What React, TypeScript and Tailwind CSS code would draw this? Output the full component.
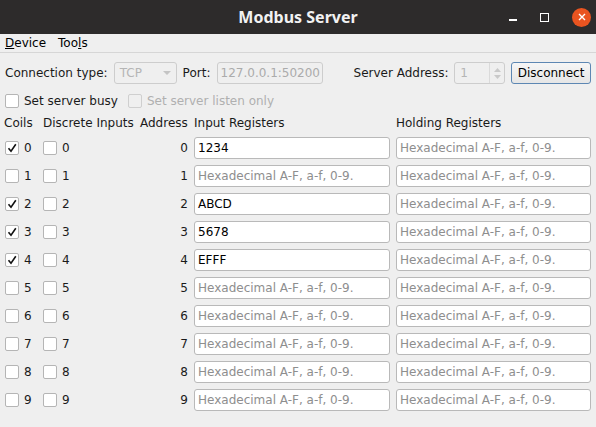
import React from 'react';

const font = { fontFamily: '"DejaVu Sans", sans-serif' };

const Check: React.FC<{ checked?: boolean; disabled?: boolean }> = ({ checked, disabled }) => (
  <span
    className={`flex h-[14px] w-[14px] shrink-0 items-center justify-center rounded-[2px] border ${
      disabled ? 'border-[#cfcfcf] bg-[#efefef]' : 'border-[#b5b5b5] bg-white'
    }`}
  >
    {checked && (
      <svg width="10" height="10" viewBox="0 0 10 10">
        <path d="M1.5 5.2 L4 8.2 L8.8 1.2" fill="none" stroke="#111" strokeWidth="1.6" />
      </svg>
    )}
  </span>
);

const HexInput: React.FC<{ value?: string; width: string }> = ({ value, width }) => (
  <div
    className={`flex h-[22px] ${width} items-center rounded-[3px] border border-[#b9b9b9] bg-white px-[3px] text-[12px] ${
      value ? 'text-black' : 'text-[#8e8e8e]'
    }`}
  >
    {value ?? 'Hexadecimal A-F, a-f, 0-9.'}
  </div>
);

const rows = [
  { coil: true, input: '1234' },
  { coil: false },
  { coil: true, input: 'ABCD' },
  { coil: true, input: '5678' },
  { coil: true, input: 'EFFF' },
  { coil: false },
  { coil: false },
  { coil: false },
  { coil: false },
  { coil: false },
];

export default function App() {
  return (
    <div className="flex h-[427px] w-[596px] flex-col overflow-hidden bg-[#efefef] text-[12px] text-[#1a1a1a]" style={font}>
      {/* title bar */}
      <div className="relative flex h-[34px] shrink-0 items-center justify-center bg-[#2d2b2b]">
        <span className="text-[16px] font-bold text-[#f2f2f2]" style={{ fontFamily: '"Noto Sans", sans-serif' }}>
          Modbus Server
        </span>
        <div className="absolute right-[5px] top-0 flex h-[34px] items-center gap-[23px]">
          <span className="mt-[6px] h-[1.5px] w-[8px] bg-white" />
          <span className="h-[9px] w-[9px] border border-white" />
          <span className="flex h-[19px] w-[19px] items-center justify-center rounded-full bg-[#e95420]">
            <svg width="8" height="8" viewBox="0 0 8 8">
              <path d="M1 1 L7 7 M7 1 L1 7" stroke="white" strokeWidth="1.4" />
            </svg>
          </span>
        </div>
      </div>

      {/* menu bar */}
      <div className="flex h-[19px] shrink-0 items-center gap-[12px] border-b border-[#d6d6d6] px-[5px] text-[12px] text-black">
        <span>
          <span className="underline">D</span>evice
        </span>
        <span>
          Too<span className="underline">l</span>s
        </span>
      </div>

      {/* connection row */}
      <div className="mt-[9px] flex h-[22px] items-center px-[5px]">
        <span className="w-[109px]">Connection type:</span>
        <div className="flex h-[22px] w-[63px] items-center justify-between rounded-[3px] border border-[#cdcdcd] px-[5px] text-[#b5b5b5]">
          <span>TCP</span>
          <svg width="8" height="5" viewBox="0 0 8 5">
            <path d="M0 0 L8 0 L4 4 Z" fill="#c4c4c4" />
          </svg>
        </div>
        <span className="ml-[6px] w-[34px]">Port:</span>
        <div className="flex h-[22px] w-[106px] items-center rounded-[3px] border border-[#cdcdcd] px-[3px] text-[#ababab]">
          127.0.0.1:50200
        </div>
        <span className="ml-[31px] w-[101px]">Server Address:</span>
        <div className="flex h-[22px] w-[51px] items-center justify-between rounded-[3px] border border-[#cdcdcd] pl-[5px] text-[#b5b5b5]">
          <span>1</span>
          <div className="flex h-full w-[15px] flex-col items-center justify-center gap-[3px] border-l border-[#dadada]">
            <svg width="7" height="4" viewBox="0 0 7 4">
              <path d="M0 4 L3.5 0 L7 4 Z" fill="#c9c9c9" />
            </svg>
            <svg width="7" height="4" viewBox="0 0 7 4">
              <path d="M0 0 L3.5 4 L7 0 Z" fill="#c9c9c9" />
            </svg>
          </div>
        </div>
        <button className="ml-[6px] flex h-[22px] w-[80px] items-center justify-center rounded-[3px] border border-[#5d87b3] bg-gradient-to-b from-[#f6f6f6] to-[#e6e6e6] text-[12px] text-black">
          Disconnect
        </button>
      </div>

      {/* options row */}
      <div className="mt-[9px] flex h-[15px] items-center px-[5px]">
        <Check />
        <span className="ml-[5px]">Set server busy</span>
        <span className="ml-[10px]">
          <Check disabled />
        </span>
        <span className="ml-[5px] text-[#b0b0b0]">Set server listen only</span>
      </div>

      {/* header row */}
      <div className="mt-[7px] flex h-[16px] items-center pl-[4px]">
        <span className="w-[39px]">Coils</span>
        <span className="w-[97px]">Discrete Inputs</span>
        <span className="w-[54px]">Address</span>
        <span className="w-[202px]">Input Registers</span>
        <span>Holding Registers</span>
      </div>

      {/* data rows */}
      <div className="mt-[6px] flex flex-col gap-[6px] pl-[5px]">
        {rows.map((r, i) => (
          <div key={i} className="flex h-[22px] items-center">
            <div className="flex w-[38px] items-center gap-[5px]">
              <Check checked={r.coil} />
              <span>{i}</span>
            </div>
            <div className="flex w-[97px] items-center gap-[5px]">
              <Check />
              <span>{i}</span>
            </div>
            <span className="w-[48px] text-right">{i}</span>
            <div className="ml-[6px]">
              <HexInput value={r.input} width="w-[196px]" />
            </div>
            <div className="ml-[6px]">
              <HexInput width="w-[195px]" />
            </div>
          </div>
        ))}
      </div>
    </div>
  );
}
